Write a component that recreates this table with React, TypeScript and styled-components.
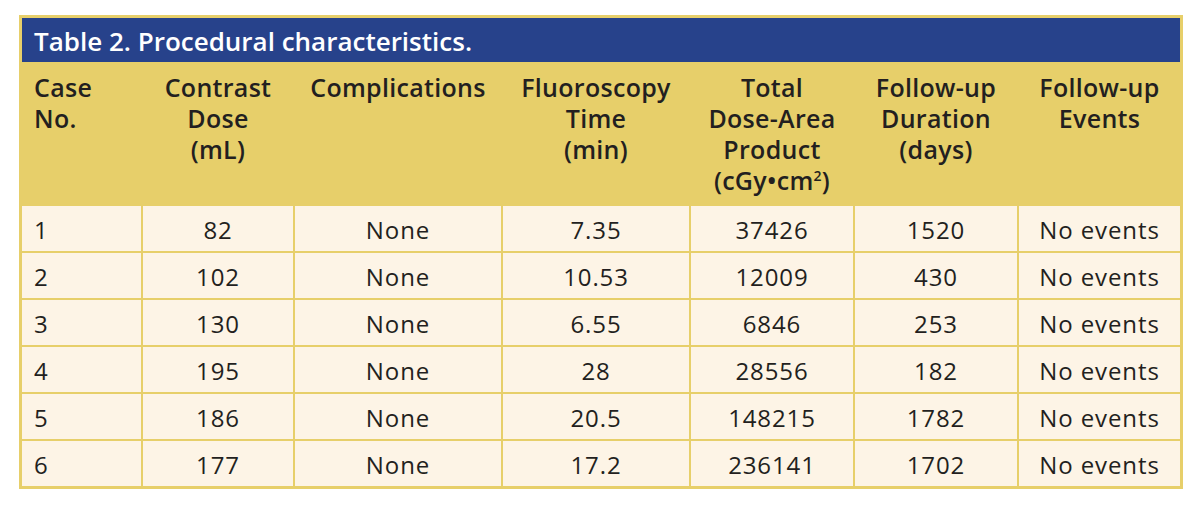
import React from "react";
import styled, { createGlobalStyle } from "styled-components";

const Global = createGlobalStyle`
  html, body { margin: 0; padding: 0; background: #ffffff; }
  body { font-family: "Open Sans", "Noto Sans", sans-serif; color: #231f20; }
`;

const YELLOW = "#e7cf6a";

const Page = styled.div`
  padding: 15px 0 0 19px;
`;

const Frame = styled.div`
  width: 1158px;
  border: 3px solid ${YELLOW};
  background: ${YELLOW};
`;

const TitleBar = styled.div`
  height: 44px;
  background: #27428b;
  color: #ffffff;
  display: flex;
  align-items: center;
  padding: 2px 0 0 12px;
  box-sizing: border-box;
  font-size: 26px;
  font-weight: 600;
`;

const Grid = styled.div`
  display: grid;
  grid-template-columns: 119px 150px 206px 186px 162px 162px 161px;
  grid-auto-rows: 45px;
  grid-template-rows: 142px;
  gap: 2px;
  background: ${YELLOW};
`;

const HeadCell = styled.div<{ $left?: boolean }>`
  background: ${YELLOW};
  font-size: 25px;
  font-weight: 600;
  line-height: 31px;
  letter-spacing: 0.3px;
  text-align: ${(p) => (p.$left ? "left" : "center")};
  padding: 10px ${(p) => (p.$left ? "0 0 12px" : "0 0 0")};
  color: #231f20;
`;

const Cell = styled.div<{ $left?: boolean }>`
  background: #fdf4e6;
  font-size: 24px;
  letter-spacing: 0.9px;
  display: flex;
  align-items: center;
  justify-content: ${(p) => (p.$left ? "flex-start" : "center")};
  padding: 2px 0 0 ${(p) => (p.$left ? "12px" : "0")};
  color: #231f20;
`;

const Sup = styled.sup`
  font-size: 14px;
  vertical-align: 9px;
  line-height: 0;
`;

const rows = [
  ["1", "82", "None", "7.35", "37426", "1520", "No events"],
  ["2", "102", "None", "10.53", "12009", "430", "No events"],
  ["3", "130", "None", "6.55", "6846", "253", "No events"],
  ["4", "195", "None", "28", "28556", "182", "No events"],
  ["5", "186", "None", "20.5", "148215", "1782", "No events"],
  ["6", "177", "None", "17.2", "236141", "1702", "No events"],
];

export default function App() {
  return (
    <>
      <Global />
      <Page>
        <Frame>
          <TitleBar>Table 2. Procedural characteristics.</TitleBar>
          <Grid>
            <HeadCell $left>
              Case
              <br />
              No.
            </HeadCell>
            <HeadCell>
              Contrast
              <br />
              Dose
              <br />
              (mL)
            </HeadCell>
            <HeadCell>Complications</HeadCell>
            <HeadCell>
              Fluoroscopy
              <br />
              Time
              <br />
              (min)
            </HeadCell>
            <HeadCell>
              Total
              <br />
              Dose-Area
              <br />
              Product
              <br />
              (cGy•cm<Sup>2</Sup>)
            </HeadCell>
            <HeadCell>
              Follow-up
              <br />
              Duration
              <br />
              (days)
            </HeadCell>
            <HeadCell>
              Follow-up
              <br />
              Events
            </HeadCell>
            {rows.map((r) =>
              r.map((c, i) => (
                <Cell key={r[0] + "-" + i} $left={i === 0}>
                  {c}
                </Cell>
              ))
            )}
          </Grid>
        </Frame>
      </Page>
    </>
  );
}
